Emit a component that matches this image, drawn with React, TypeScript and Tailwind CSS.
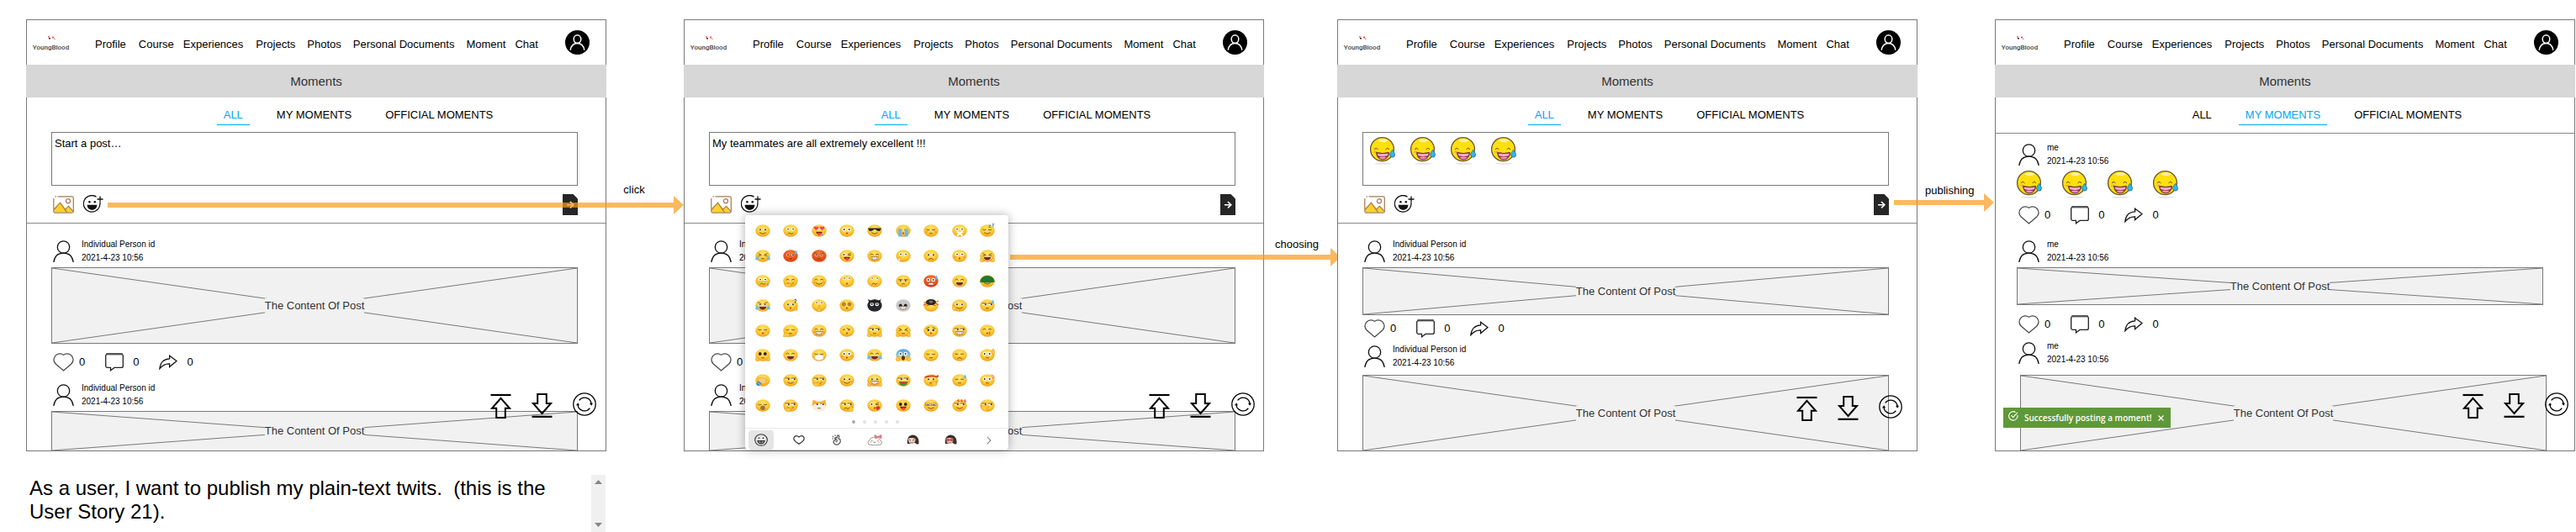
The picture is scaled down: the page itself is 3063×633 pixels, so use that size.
import React from "react";
import type { ReactNode } from "react";

const NAV: { label: string; gap: string }[] = [
  { label: "Profile", gap: "" },
  { label: "Course", gap: "ml-[15px]" },
  { label: "Experiences", gap: "ml-[11px]" },
  { label: "Projects", gap: "ml-[15px]" },
  { label: "Photos", gap: "ml-[14px]" },
  { label: "Personal Documents", gap: "ml-[14px]" },
  { label: "Moment", gap: "ml-[14px]" },
  { label: "Chat", gap: "ml-[11px]" },
];

const TABS = ["ALL", "MY MOMENTS", "OFFICIAL MOMENTS"];

function Logo() {
  return (
    <a href="#home" className="mt-1 flex w-[43px] flex-col items-center">
      <svg width="10" height="5" viewBox="0 0 10 5" className="block" aria-hidden="true">
        <rect x="1" y="0" width="2" height="2" fill="#f08a80" />
        <rect x="2" y="2" width="2" height="1.5" fill="#333" />
        <rect x="6" y="0.5" width="2" height="2" fill="#f05a50" />
        <rect x="8" y="2.5" width="1.5" height="1.5" fill="#f08a80" />
      </svg>
      <span className="mt-1 font-[Roboto,sans-serif] text-[8px] leading-[10px] font-medium text-[#444]">YoungBlood</span>
    </a>
  );
}

function Avatar() {
  return (
    <svg width="29" height="29" viewBox="0 0 29 29" className="block">
      <circle cx="14.5" cy="14.5" r="14.5" fill="#000" />
      <g fill="none" stroke="#fff" strokeWidth="1.5">
        <ellipse cx="14.5" cy="10.6" rx="4.3" ry="4.8" />
        <path d="M6.2 23.6C7 18.5 10 15.4 14.5 15.4S22 18.5 22.8 23.6" />
      </g>
    </svg>
  );
}

function UserIcon() {
  return (
    <svg width="25" height="26" viewBox="0 0 25 26" className="block shrink-0" aria-hidden="true" fill="none" stroke="#111" strokeWidth="1.3">
      <circle cx="12.5" cy="8" r="7.2" />
      <path d="M0.8 26C1.8 19 6.2 15.2 12.5 15.2S23.2 19 24.2 26" />
    </svg>
  );
}

function PictureIcon() {
  return (
    <svg width="25" height="21" viewBox="0 0 25 21" className="block">
      <path d="M1.5 19V14.5L8.5 8l7.2 7.8 3-2.8 5 5.5V19.5H2z" fill="#fcd12a" />
      <g fill="none" stroke="#a5794e" strokeWidth="1.2">
        <path d="M5.5 0.8H22.5a1.8 1.8 0 0 1 1.8 1.8V18.4a1.8 1.8 0 0 1-1.8 1.8H2.6A1.8 1.8 0 0 1 .8 18.4V3M2.5.8H4" />
        <path d="M1 16.6L8.5 8.2l8 11.4M14.5 16.4l4-4 5.6 6" />
        <circle cx="18" cy="6.2" r="2.5" />
      </g>
    </svg>
  );
}

function AddEmojiIcon() {
  return (
    <svg width="24" height="22" viewBox="0 0 24 22" className="block" fill="none" stroke="#111" strokeWidth="1.3">
      <path d="M15.6 2.2A9.8 9.8 0 1 0 19.8 8.6" />
      <path d="M20 1.5v7M16.5 5h7" />
      <circle cx="7.4" cy="8.2" r="1.3" fill="#111" stroke="none" />
      <circle cx="13.8" cy="8.2" r="1.3" fill="#111" stroke="none" />
      <path d="M4.6 11.8H16.4C16.4 15.6 13.8 17.8 10.5 17.8S4.6 15.6 4.6 11.8z" fill="#111" stroke="none" />
    </svg>
  );
}

function SendIcon() {
  return (
    <svg width="18" height="25" viewBox="0 0 18 25" className="block">
      <path d="M0 0H12.5L18 5.5V25H0z" fill="#262626" />
      <path d="M5 12.7h7.5M9 9l3.8 3.7L9 16.4" fill="none" stroke="#fff" strokeWidth="1.6" />
    </svg>
  );
}

function HeartIcon() {
  return (
    <svg width="25" height="22" viewBox="0 0 25 22" className="block" fill="none" stroke="#444" strokeWidth="1.2">
      <path d="M12.5 2.4C15 .4 19.4.3 22 3.2 24.6 6.3 24.4 10.2 21.8 13L12.5 21 3.2 13C.6 10.2.4 6.3 3 3.2 5.6.3 10 .4 12.5 2.4z" />
    </svg>
  );
}

function CommentIcon() {
  return (
    <svg width="22" height="22" viewBox="0 0 22 22" className="block" fill="none" stroke="#222" strokeWidth="1.3">
      <path d="M1.8 1.4H20.2L21.3 3V15.4a2 2 0 0 1-2 2H11L6.5 20.8V17.4H2.7a2 2 0 0 1-2-2V3z" />
      <path d="M1.5 1.2H20.5" stroke="#555" strokeWidth="2.4" />
    </svg>
  );
}

function ShareIcon() {
  return (
    <svg width="22" height="18" viewBox="0 0 22 18" className="block" fill="none" stroke="#111" strokeWidth="1.3">
      <path d="M12.6 1.2L21 7.6 12.6 14.6V10.8C7.5 10.6 4 12.6.9 16.6 1.6 9.6 5.4 5.2 12.6 4.8z" />
    </svg>
  );
}

function ToTopIcon() {
  return (
    <svg width="25" height="31" viewBox="0 0 25 31" className="block" fill="none" stroke="#000" strokeWidth="2">
      <path d="M0.5 3H24.5" strokeWidth="2.2" />
      <path d="M12.5 6.8L23 18.8H17.8V30H7.2V18.8H2z" />
    </svg>
  );
}

function ToBottomIcon() {
  return (
    <svg width="25" height="31" viewBox="0 0 25 31" className="block" fill="none" stroke="#000" strokeWidth="2">
      <path d="M12.5 25L23 13H17.8V2H7.2V13H2z" />
      <path d="M0.5 28.8H24.5" strokeWidth="2.2" />
    </svg>
  );
}

function RefreshIcon() {
  return (
    <svg width="28" height="28" viewBox="0 0 28 28" className="block" fill="none" stroke="#000" strokeWidth="1.3">
      <circle cx="14" cy="14" r="13.2" />
      <path d="M7.6 9.4A8 8 0 0 1 22 13.4M20.4 18.6A8 8 0 0 1 6 14.4" />
      <path d="M20 12.8h4l-1.8 3zM4 15.2h4L6.2 12.2z" fill="#000" stroke="none" />
    </svg>
  );
}

function LaughTear() {
  return (
    <svg width="30" height="33" viewBox="0 0 30 33" className="block" role="img" aria-label="laughing with a tear">
      <ellipse cx="15.5" cy="31.6" rx="10.5" ry="1.2" fill="#e6e6e6" />
      <circle cx="14.5" cy="14.6" r="13.9" fill="#ffe00e" stroke="#6a5630" strokeWidth="1.3" />
      <ellipse cx="15.5" cy="4.2" rx="5.5" ry="2" fill="#fff2a0" />
      <path d="M5 14.8l2.2-1.6 2.2 1.6M18.6 14.8l2.2-1.6 2.2 1.6" fill="none" stroke="#6a4a1c" strokeWidth="1" />
      <ellipse cx="6.2" cy="18" rx="2.2" ry="1.4" fill="#fdab4c" />
      <path d="M7.6 18.4Q15 20.6 22.6 18.4C22.2 24 19 26.8 15 26.8S8 24 7.6 18.4z" fill="#8c3048" stroke="#6a3a38" strokeWidth="1" />
      <path d="M8.6 19.4Q15 21.2 21.6 19.4L20.8 22.2Q15 23.8 9.4 22.2z" fill="#ffb3da" />
      <path d="M10.4 24.2Q15 22.6 19.8 24.2 18 26.2 15 26.2T10.4 24.2z" fill="#ff8fc4" />
      <path d="M26.6 15.4C28.6 18.2 29.5 19.8 29.5 21.2A2.9 2.9 0 0 1 23.7 21.2C23.7 19.8 24.6 18.2 26.6 15.4z" fill="#2cb9ee" stroke="#2b6f94" strokeWidth="0.9" />
    </svg>
  );
}

/* Each face: tone, eyes, mouth, extra */
type Face = [string, string, string, string?];

const FACES: Face[] = [
  ["y", "dot", "smile"], ["y", "white", "wave"], ["y", "heart", "tongue", "drip"], ["y", "wide", "dot"], ["y", "shades", "smile"], ["y", "flat", "dot", "streams"], ["y", "down", "dash", "blush"], ["y", "white", "none", "cross"], ["y", "down", "smile", "zzz"],
  ["y", "squint", "dash", "tears"], ["r", "dot", "dash", "sweat"], ["r", "angry", "frown"], ["y", "wink", "tongue"], ["y", "up", "teeth"], ["y", "white", "none", "pick"], ["y", "dot", "frown"], ["y", "white", "dot", "blush"], ["y", "squint", "laugh", "hands"],
  ["y", "white", "wave", "snot"], ["y", "up", "smile", "hand"], ["y", "up", "smile", "blush"], ["y", "high", "dot"], ["y", "high", "wave"], ["y", "half", "dash"], ["r", "wide", "grit", "sweat"], ["y", "up", "laugh"], ["y", "none", "smile", "helmet"],
  ["y", "angry", "laugh", "tears"], ["y", "dot", "dot", "question"], ["y", "high", "none", "finger"], ["y", "swirl", "dot"], ["k", "wide", "none", "horns"], ["e", "skull", "teeth"], ["y", "squint", "none", "pan"], ["y", "dot", "smile", "wave"], ["y", "side", "dash", "sweat"],
  ["y", "down", "dot", "blow"], ["y", "down", "dash", "clap"], ["y", "up", "teeth", "blush"], ["y", "tilt", "dot"], ["y", "side", "dash", "hands"], ["y", "squint", "dash", "hands"], ["y", "sad", "dot"], ["y", "side", "teeth"], ["y", "up", "dot", "kiss"],
  ["y", "round", "dash", "hands"], ["y", "up", "laugh"], ["y", "down", "none", "mask"], ["y", "wide", "dot", "blush"], ["y", "up", "laugh", "tears"], ["b", "wide", "open", "hands"], ["y", "down", "dash"], ["y", "flat", "frown"], ["y", "wide", "dash", "salute"],
  ["y", "none", "none", "facepalm"], ["y", "side", "smile"], ["y", "side", "wave", "hand"], ["y", "dot", "smile", "blush"], ["y", "dot", "teeth", "hands"], ["y", "side", "none", "melon"], ["y", "dot", "dash", "band"], ["y", "flat", "dash", "sweat"], ["y", "wide", "dash", "shock"],
  ["y", "down", "yawn"], ["y", "side", "smile", "hand"], ["d", "side", "dash", "ears"], ["y", "side", "wave", "finger2"], ["y", "wink", "dot", "kissmark"], ["y", "round", "tongue"], ["y", "glasses", "smile"], ["y", "side", "smile", "six"], ["y", "side", "none", "cover"],
];

const STROKE = "#6b3410";

function eyes(kind: string): ReactNode {
  const line = (d: string) => <path d={d} fill="none" stroke={STROKE} strokeWidth="1.6" strokeLinecap="round" />;
  const pair = (r: number, p: number, y: number, dx: number, fill = "#fff") => (
    <>
      <circle cx="11.5" cy={y} r={r} fill={fill} />
      <circle cx="23.5" cy={y} r={r} fill={fill} />
      <circle cx={11.5 + dx} cy={y} r={p} fill="#222" />
      <circle cx={23.5 + dx} cy={y} r={p} fill="#222" />
    </>
  );
  switch (kind) {
    case "dot": return pair(2.8, 1.9, 12.5, 0.4);
    case "white": return pair(3.8, 1.7, 11, 0.6);
    case "wide": return pair(4.4, 1.8, 12, 0);
    case "high": return pair(3.4, 1.5, 8, 0.5);
    case "round": return pair(4, 3, 12, 0, "#7a4212");
    case "skull": return pair(4, 3.4, 15, 0, "#555");
    case "heart": return <path d="M11 14L5.5 8.6C4 5 9 3.4 11 6.8 13 3.4 18 5 16.5 8.6zM25 14L19.5 8.6C18 5 23 3.4 25 6.8 27 3.4 32 5 30.5 8.6z" fill="#ee3a68" />;
    case "shades": return <path d="M2 9H34L31 15Q25 18 20 12H16Q11 18 5 15z" fill="#26262a" />;
    case "flat": return line("M8 12.5H14M21 12.5H27");
    case "down": return line("M7.5 12.5Q11 15.5 14.5 12.5M20.5 12.5Q24 15.5 27.5 12.5");
    case "up": return line("M7.5 12Q11 8 14.5 12M20.5 12Q24 8 27.5 12");
    case "squint": return line("M8 9.5L14.5 13 8 15M28 9.5L21.5 13 28 15");
    case "angry": return <>{pair(2.8, 1.7, 13, 0)}{line("M7 8L14 11M28 8L21 11")}</>;
    case "wink": return <><circle cx="11" cy="12" r="3.8" fill="#fff" /><circle cx="11" cy="12" r="1.8" fill="#222" />{line("M21 10.5L27 9M21 13L27 13")}</>;
    case "half": return <>{pair(3.2, 1.7, 14, 0, "#e9d9a0")}{line("M7 11.5H15M20 11.5H28")}</>;
    case "swirl": return <g fill="none" stroke={STROKE} strokeWidth="1.3"><circle cx="11" cy="12" r="4" /><circle cx="11" cy="12" r="1.6" /><circle cx="24" cy="12" r="4" /><circle cx="24" cy="12" r="1.6" /></g>;
    case "side": return <><path d="M6 10.5H15.5V13Q11 16 6 13zM20 10.5H29.5V13Q25 16 20 13z" fill="#fff" /><circle cx="13.5" cy="12.4" r="1.7" fill="#222" /><circle cx="27.5" cy="12.4" r="1.7" fill="#222" />{line("M6 10H15.5M20 10H29.5")}</>;
    case "tilt": return line("M18 9L25 12L21 14M9 13L13 12");
    case "sad": return <>{pair(3.4, 2.4, 13.5, 0)}{line("M7 10L13 7M28 10L22 7")}</>;
    case "glasses": return <><path d="M5 10H16V15H5zM19 10H30V15H19z" fill="#fff" stroke={STROKE} strokeWidth="1" />{line("M8 13H13M22 13H27")}</>;
    default: return null;
  }
}

function mouth(kind: string): ReactNode {
  const line = (d: string) => <path d={d} fill="none" stroke={STROKE} strokeWidth="1.6" strokeLinecap="round" />;
  switch (kind) {
    case "smile": return line("M11 20Q18 25.5 25 20");
    case "frown": return line("M13 23Q18 18 23 23");
    case "wave": return line("M12 22Q15 18.5 18 21.5T24 20.5");
    case "dash": return line("M15 21.5H21");
    case "dot": return <ellipse cx="18" cy="21" rx="2.4" ry="1.8" fill="#b3480c" />;
    case "open": return <ellipse cx="18" cy="22" rx="4" ry="5.4" fill="#6b2410" />;
    case "yawn": return <ellipse cx="18" cy="20.5" rx="5.6" ry="5.4" fill="#9a7048" />;
    case "laugh": return <path d="M8.5 17H27.5Q26 26 18 26T8.5 17z" fill="#7a2c10" stroke="#fff" strokeWidth="1.2" />;
    case "teeth": return <><path d="M9 17H27Q26.5 25 18 25T9 17z" fill="#fff" stroke={STROKE} strokeWidth="1" /><path d="M13.5 17V24M18 17V25M22.5 17V24" stroke={STROKE} strokeWidth="0.8" /></>;
    case "tongue": return <><path d="M10.5 17.5H25.5Q24 24 18 24T10.5 17.5z" fill="#7a2410" /><path d="M15 20H22V25Q18.5 28 15 25z" fill="#ee4650" /></>;
    case "grit": return <path d="M11 21Q18 16 25 21V24H11z" fill="#fff" stroke="#6b1c10" strokeWidth="1" />;
    default: return null;
  }
}

function extra(kind: string | undefined): ReactNode {
  const palm = { fill: "#ffca3a", stroke: "#d98612", strokeWidth: 0.9 };
  switch (kind) {
    case "drip": return <path d="M24 20Q28 26 25.5 28.5 22 28 24 20z" fill="#58b7ee" />;
    case "streams": return <path d="M6.5 11H14.5V29H6.5zM21.5 11H29.5V29H21.5z" fill="#6fb6ea" />;
    case "blush": return <><ellipse cx="7" cy="18" rx="3.4" ry="2" fill="#fb8a3c" opacity="0.75" /><ellipse cx="29" cy="18" rx="3.4" ry="2" fill="#fb8a3c" opacity="0.75" /></>;
    case "cross": return <path d="M12 17L25 27M25 17L12 27" stroke="#fff" strokeWidth="4.2" />;
    case "zzz": return <path d="M21 2H26L21.5 7H26M29 -1H34L29.5 4H34" fill="none" stroke="#5686b8" strokeWidth="1.8" />;
    case "tears": return <><path d="M2 17Q10 15 9 20 7 27 0 24z" fill="#67bdf0" /><path d="M34 17Q26 15 27 20 29 27 36 24z" fill="#67bdf0" /></>;
    case "sweat": return <path d="M31 1Q35.5 7 33 10.5 28.5 12 27.5 7.5z" fill="#63bbef" />;
    case "snot": return <><path d="M8 15H27V18H8z" fill="#9fcf5a" opacity="0.8" /><path d="M29 18Q34 24 30.5 27 26 25 29 18z" fill="#58b7ee" /></>;
    case "pick": return <path d="M9 17L12 29L5 25z" {...palm} fill="#fff" />;
    case "hands": return <><path d="M3 19Q9 20 9 29H2Q-1 23 3 19z" {...palm} /><path d="M33 19Q27 20 27 29H34Q37 23 33 19z" {...palm} /></>;
    case "hand": return <path d="M3 22Q14 22 24 17 24 22 18 23 21 29 10 29 4 28 3 22z" {...palm} />;
    case "salute": return <path d="M29 9Q28 2 32 0 36 3 35 9 35 15 31 16z" {...palm} />;
    case "wave": return <path d="M2 13Q7 14 8 20 11 24 7 28 1 27 1 20z" {...palm} />;
    case "clap": return <path d="M1 29Q2 19 8 18 9 24 12 19 17 23 15 29z" {...palm} />;
    case "finger": return <path d="M16.5 15H20V23Q24 23 23 29H13Q12 24 16.5 23z" {...palm} />;
    case "finger2": return <path d="M22 29Q20 21 25 21L30 14 31 21Q35 25 31 29z" {...palm} />;
    case "blow": return <path d="M21 20Q29 15 32 20 30 27 24 25z" {...palm} />;
    case "helmet": return <path d="M0 17Q3 2 18 2T36 17Q18 21 0 17z" fill="#24772c" />;
    case "question": return <><path d="M26 3Q28 -1 31 1 33 4 29 6V9" fill="none" stroke="#333" strokeWidth="1.8" /><path d="M30 17Q37 20 33 27L28 26z" {...palm} /></>;
    case "horns": return <path d="M5 9L2 0L13 5L18 0L24 5L33 0L31 9z" fill="#222" />;
    case "pan": return <><ellipse cx="18" cy="7" rx="12" ry="7" fill="#2b2424" /><ellipse cx="18" cy="6" rx="5" ry="3" fill="#77756c" /><path d="M0 14L8 11M36 14L29 10M1 8H5M31 6L36 4" stroke="#d93c3c" strokeWidth="2" /></>;
    case "mask": return <path d="M8 16Q18 13 28 16V24Q18 31 8 24z" fill="#f7f9fa" stroke="#b8c5cc" strokeWidth="0.8" />;
    case "kiss": return <path d="M22 17Q26 18 23 20.5 26 22 22 24" fill="none" stroke={STROKE} strokeWidth="1.3" />;
    case "kissmark": return <path d="M23 17Q30 15 31 20 28 27 23 25 19 20 23 17z" fill="#d92a3a" />;
    case "facepalm": return <><path d="M1 22Q8 20 11 28H5z" fill="#2e90dc" /><path d="M6 10Q16 6 28 12 31 15 24 17L27 22Q20 26 12 22 6 17 6 10z" {...palm} fill="#f8cb76" /><path d="M4 19Q12 18 14 25" stroke="#2e90dc" strokeWidth="3" fill="none" /></>;
    case "melon": return <><path d="M8 18H29Q28 28 18 28T8 18z" fill="#38953d" /><path d="M11 18H26Q25 24 18 24T11 18z" fill="#e83232" /></>;
    case "band": return <><path d="M3 8Q18 2 33 7L35 3" fill="none" stroke="#d43b22" strokeWidth="3.5" /><path d="M20 29V17Q24 13 26 18H31V27z" {...palm} /></>;
    case "shock": return <path d="M27 2Q35 2 34 11M29 5Q32 6 31 10" fill="none" stroke="#ee7777" strokeWidth="2" />;
    case "ears": return <path d="M1 17L3 1L13 6H23L33 1L35 17Q29 8 18 9T1 17z" fill="#f8b133" />;
    case "six": return <path d="M16 0Q12 3 14 6 17 7 17 4 15 2 13.5 5M24 0Q20 3 22 6 25 7 25 4 23 2 21.5 5M32 0Q28 3 30 6 33 7 33 4 31 2 29.5 5" fill="none" stroke="#e33b30" strokeWidth="1.7" />;
    case "cover": return <path d="M4 14Q13 14 22 17 23 21 16 21L20 25Q14 30 8 27 3 22 4 14z" {...palm} />;
    default: return null;
  }
}

function FaceIcon({ face }: { face: Face }) {
  const tones: Record<string, string> = { y: "url(#tone-y)", r: "url(#tone-r)", b: "url(#tone-b)", k: "#26272b", e: "#c9c9cc", d: "#f7efdc" };
  return (
    <svg width="18" height="15" viewBox="0 0 36 30" className="block overflow-visible" aria-hidden="true">
      <ellipse cx="18" cy="15" rx="17.3" ry="14.6" fill={tones[face[0]]} />
      {eyes(face[1])}
      {mouth(face[2])}
      {extra(face[3])}
    </svg>
  );
}

function Tones() {
  return (
    <svg width="0" height="0" className="absolute" aria-hidden="true">
      <defs>
        <radialGradient id="tone-y" cx="0.5" cy="0.35" r="0.68">
          <stop offset="0" stopColor="#ffe774" />
          <stop offset="0.6" stopColor="#fdc932" />
          <stop offset="1" stopColor="#ee940e" />
        </radialGradient>
        <radialGradient id="tone-r" cx="0.5" cy="0.3" r="0.7">
          <stop offset="0" stopColor="#fb7a30" />
          <stop offset="1" stopColor="#dd3d12" />
        </radialGradient>
        <linearGradient id="tone-b" x1="0" y1="0" x2="0" y2="1">
          <stop offset="0" stopColor="#4aa2ea" />
          <stop offset="0.5" stopColor="#8cc3dd" />
          <stop offset="0.75" stopColor="#fbc832" />
        </linearGradient>
      </defs>
    </svg>
  );
}

function Girl({ glasses }: { glasses?: boolean }) {
  return (
    <svg width="15" height="13" viewBox="0 0 30 26" className="block" aria-hidden="true">
      <path d="M2 22Q-1 4 13 1 27 0 29 16L29 22Q25 25 20 20L6 22z" fill="#3a302e" />
      <path d="M3 10Q12 6 21 10 22 20 13 22 4 21 3 10z" fill="#f3d3c4" />
      {glasses ? (
        <path d="M4 11H11V15H4zM14 11H21V15H14zM11 13H14" fill="#b87a7a" stroke="#b02a36" strokeWidth="1.5" />
      ) : (
        <path d="M5 12L10 14M19 12L14 14" stroke="#4a2a22" strokeWidth="1.5" />
      )}
      <path d="M9 18Q13 21 17 18" fill="none" stroke="#b04848" strokeWidth="1.5" />
    </svg>
  );
}

function EmojiPicker() {
  const cell = "flex h-[23px] w-[30px] items-center justify-center rounded-sm";
  return (
    <div role="dialog" aria-label="Emoji picker" className="absolute top-[232px] left-[72px] z-20 flex w-[313px] flex-col rounded bg-white shadow-[0_0_12px_rgba(0,0,0,0.32)]">
      <Tones />
      <div className="grid h-[241px] grid-cols-9 grid-rows-8 pt-1 pr-2 pl-1">
        {FACES.map((face, i) => (
          <button key={i} type="button" aria-label={`Emoji ${i + 1}`} className="flex min-h-0 items-center justify-center">
            <FaceIcon face={face} />
          </button>
        ))}
      </div>
      <div className="flex h-[7px] items-end justify-center gap-[9px] pr-1">
        <span className="size-1 rounded-full bg-[#aaa]" />
        <span className="size-1 rounded-full bg-[#e0e0e0]" />
        <span className="size-1 rounded-full bg-[#e0e0e0]" />
        <span className="size-1 rounded-full bg-[#e0e0e0]" />
        <span className="size-1 rounded-full bg-[#e0e0e0]" />
      </div>
      <div className="mt-[5px] flex items-center justify-between border-t border-[#e8e8e8] pt-[2px] pr-2 pl-1">
        <button type="button" aria-label="Smileys" className={cell + " bg-[#e5e5e5]"}>
          <svg width="16" height="15" viewBox="0 0 16 15" fill="none" stroke="#333" strokeWidth="1.1">
            <ellipse cx="8" cy="7.5" rx="7.3" ry="6.8" />
            <path d="M3.8 8.5H12.2Q11.5 12 8 12T3.8 8.5zM8 8.5V12M4.5 10H11.5" />
            <path d="M5.5 4.5V6M10.5 4.5V6" strokeWidth="1.5" />
          </svg>
        </button>
        <button type="button" aria-label="Favorites" className={cell}>
          <svg width="14" height="11" viewBox="0 0 14 11" fill="none" stroke="#333" strokeWidth="1.2">
            <path d="M7 2Q10-.6 12.5 1.8 14.5 4.6 11 7.4L7 10.3 3 7.4Q-.5 4.6 1.5 1.8 4-.6 7 2z" />
          </svg>
        </button>
        <button type="button" aria-label="Gestures" className={cell}>
          <svg width="12" height="13" viewBox="0 0 12 13" fill="none" stroke="#444" strokeWidth="1.1">
            <path d="M5 6L3.5 4.5Q5 3 6 4L7 1Q9 .5 8.8 2.500L8 5Q10.5 5 10 7 11 9 9 10.500 8 12.500 5 12 2 11.500 2 8L5 6L7 7.500M1 2L2.200 3.200M4 .5L4.200 2M.5 5H2M4.500 8.500L6.500 9" />
          </svg>
        </button>
        <button type="button" aria-label="Sticker set one" className={cell}>
          <svg width="19" height="13" viewBox="0 0 38 26">
            <path d="M4 24Q-1 19 5 14 8 6 18 6T32 14Q38 18 33 24 18 27 4 24z" fill="#fff" stroke="#777" strokeWidth="1.5" />
            <path d="M18 1L25 5L34 1V9L26 6L20 10z" fill="#ef858a" stroke="#a9474e" strokeWidth="1" />
            <path d="M10 14L13 15M24 15L27 14M15 18Q18 20 21 18" fill="none" stroke="#555" strokeWidth="1.4" />
            <circle cx="9" cy="18" r="2" fill="#f8b4b4" /><circle cx="28" cy="18" r="2" fill="#f8b4b4" />
          </svg>
        </button>
        <button type="button" aria-label="Sticker set two" className={cell}><Girl /></button>
        <button type="button" aria-label="Sticker set three" className={cell}><Girl glasses /></button>
        <button type="button" aria-label="More sticker sets" className={cell}>
          <svg width="6" height="10" viewBox="0 0 6 10" fill="none" stroke="#888" strokeWidth="1.1"><path d="M.8.8L5 5 .8 9.2" /></svg>
        </button>
      </div>
    </div>
  );
}

function Author({ name, className }: { name: string; className: string }) {
  return (
    <div className={"flex h-[26px] items-center gap-[9px] " + className}>
      <UserIcon />
      <div className="text-[10px] leading-4">
        <p>{name}</p>
        <p>2021-4-23 10:56</p>
      </div>
    </div>
  );
}

function Actions({ className }: { className: string }) {
  return (
    <div className={"flex h-[22px] items-center " + className}>
      <button type="button" aria-label="Like" className="flex items-center gap-[6px]"><HeartIcon /><span>0</span></button>
      <button type="button" aria-label="Comment" className="ml-6 flex items-center gap-[11px]"><CommentIcon /><span>0</span></button>
      <button type="button" aria-label="Share" className="ml-6 flex items-center gap-[11px]"><ShareIcon /><span>0</span></button>
    </div>
  );
}

function Placeholder({ className }: { className: string }) {
  return (
    <div className={"relative flex items-center justify-center border border-[#797979] bg-[#f1f1f1] " + className}>
      <svg className="absolute inset-0 size-full" viewBox="0 0 100 100" preserveAspectRatio="none" aria-hidden="true">
        <path d="M0 0L100 100M0 100L100 0" stroke="#797979" strokeWidth="1" vectorEffect="non-scaling-stroke" />
      </svg>
      <span className="relative bg-[#f1f1f1] leading-[18px] text-[#333]">The Content Of Post</span>
    </div>
  );
}

function Composer({ text, children }: { text?: string; children?: ReactNode }) {
  return (
    <form onSubmit={(e) => e.preventDefault()}>
      {children ? (
        <div role="textbox" aria-label="Post" className="mt-2 mr-[33px] ml-[29px] flex h-16 items-start border border-[#797979] pt-[5px] pl-2">
          {children}
        </div>
      ) : (
        <div className="mt-2 mr-[33px] ml-[29px] flex">
          <textarea aria-label="Post" defaultValue={text} className="h-16 w-full resize-none border border-[#797979] bg-white px-[3px] py-[5px] leading-4 outline-none" />
        </div>
      )}
      <div className="flex h-[45px] items-center border-b border-[#888] pr-[33px] pl-[31px]">
        <button type="button" aria-label="Add picture"><PictureIcon /></button>
        <button type="button" aria-label="Add emoji" className="ml-[11px]"><AddEmojiIcon /></button>
        <button type="submit" aria-label="Publish" className="ml-auto"><SendIcon /></button>
      </div>
    </form>
  );
}

function Arrow({ className }: { className: string }) {
  return (
    <div className={"pointer-events-none absolute flex items-center opacity-70 " + className} aria-hidden="true">
      <span className="h-[6px] flex-1 bg-[#f99b1c]" />
      <svg width="12" height="22" viewBox="0 0 12 22" className="block"><path d="M0 0L12 11 0 22z" fill="#f99b1c" /></svg>
    </div>
  );
}

function Screen({ active, tools, children, overlay }: { active: string; tools: string; children: ReactNode; overlay?: ReactNode }) {
  return (
    <main className="relative flex flex-col border border-[#797979] bg-white">
      <header className="flex h-[53px] items-center pr-[19px] pl-[7px]">
        <Logo />
        <nav className="mt-1 ml-[31px] flex items-center whitespace-nowrap">
          {NAV.map((item) => (
            <a key={item.label} href={"#" + item.label.toLowerCase().replace(" ", "-")} className={item.gap}>{item.label}</a>
          ))}
        </nav>
        <button type="button" aria-label="Account" className="ml-auto"><Avatar /></button>
      </header>
      <h1 className="-mx-px flex h-[39px] items-center justify-center bg-[#d7d7d7] text-[15px] text-[#333]">Moments</h1>
      <div role="tablist" className="flex justify-center gap-6 pl-[100px] whitespace-nowrap">
        {TABS.map((tab) => (
          <button
            key={tab}
            type="button"
            role="tab"
            aria-selected={tab === active}
            className={"border-b px-2 pt-3 pb-[2px] leading-[18px] " + (tab === active ? "border-[#02a7f0] text-[#02a7f0]" : "border-transparent")}
          >
            {tab}
          </button>
        ))}
      </div>
      {children}
      <div className={"absolute flex items-start gap-6 " + tools}>
        <button type="button" aria-label="Back to top"><ToTopIcon /></button>
        <button type="button" aria-label="Go to bottom"><ToBottomIcon /></button>
        <button type="button" aria-label="Refresh"><RefreshIcon /></button>
      </div>
      {overlay}
    </main>
  );
}

function Toast() {
  return (
    <div role="status" className="absolute bottom-[27px] left-[9px] flex h-6 w-[199px] items-center bg-[#5f9838] pl-[6px] text-white">
      <svg width="12" height="12" viewBox="0 0 12 12" fill="none" stroke="#fff" strokeWidth="1.1" className="-mt-1 block shrink-0" aria-hidden="true">
        <path d="M10.9 4.8A5.2 5.2 0 1 1 8.6 1.5M3.5 5.2L5.6 7.6 11 1.8" />
      </svg>
      <span className="ml-[7px] font-['Open_Sans',sans-serif] text-[10px] leading-4 font-semibold whitespace-nowrap">Successfully posting a moment!</span>
      <button type="button" aria-label="Dismiss" className="mr-2 ml-auto shrink-0">
        <svg width="7" height="7" viewBox="0 0 7 7" stroke="#fff" strokeWidth="1.1" className="block"><path d="M.5.5L6.5 6.5M6.5.5L.5 6.5" /></svg>
      </button>
    </div>
  );
}

function FeedPosts() {
  return (
    <>
      <Author name="Individual Person id" className="mt-5 ml-[31px]" />
      <Placeholder className="mt-[6px] mr-[33px] ml-[29px] h-[91px]" />
      <Actions className="mt-[11px] ml-[31px]" />
      <Author name="Individual Person id" className="mt-[15px] ml-[31px]" />
      <Placeholder className="mt-[6px] mr-[33px] -mb-px ml-[29px] h-12" />
    </>
  );
}

export default function App() {
  return (
    <div className="grid grid-cols-[minmax(0,1fr)_92px_minmax(0,1fr)_87px_minmax(0,1fr)_92px_minmax(0,1fr)] items-start bg-white pt-[23px] pr-px pl-[31px] font-['Liberation_Sans',Arial,sans-serif] text-[13px] leading-4 text-black">
      <Screen active="ALL" tools="right-[11px] bottom-[38px]" overlay={<Arrow className="top-[209px] -right-[93px] left-[96px]" />}>
        <Composer text="Start a post…" />
        <FeedPosts />
      </Screen>

      <p className="relative mt-[195px] pr-[26px] text-center">click</p>

      <Screen
        active="ALL"
        tools="right-[10px] bottom-[38px]"
        overlay={<><Arrow className="top-[271px] -right-[92px] left-[387px]" /><EmojiPicker /></>}
      >
        <Composer text="My teammates are all extremely excellent !!!" />
        <FeedPosts />
      </Screen>

      <p className="relative mt-[260px] pr-[22px] text-right">choosing</p>

      <Screen active="ALL" tools="right-[17px] bottom-[35px]" overlay={<Arrow className="top-[206px] -right-[92px] left-[661px]" />}>
        <Composer>
          <div className="flex gap-x-[18px]">
            <LaughTear /><LaughTear /><LaughTear /><LaughTear />
          </div>
        </Composer>
        <Author name="Individual Person id" className="mt-5 ml-[31px]" />
        <Placeholder className="mt-[6px] mr-[33px] ml-[29px] h-[57px]" />
        <Actions className="mt-[5px] ml-[31px]" />
        <Author name="Individual Person id" className="mt-[9px] ml-[31px]" />
        <Placeholder className="mt-[9px] mr-[33px] -mb-px ml-[29px] h-[91px]" />
      </Screen>

      <p className="relative mt-[196px] pl-[9px]">publishing</p>

      <Screen active="MY MOMENTS" tools="right-[7px] bottom-[38px]" overlay={<Toast />}>
        <div className="h-[10px] border-b border-[#888]" />
        <Author name="me" className="mt-3 ml-[27px]" />
        <div className="mt-[6px] ml-[25px] flex gap-6">
          <LaughTear /><LaughTear /><LaughTear /><LaughTear />
        </div>
        <Actions className="mt-[9px] ml-[27px]" />
        <Author name="me" className="mt-[19px] ml-[27px]" />
        <Placeholder className="mt-[6px] mr-[37px] ml-[25px] h-[45px]" />
        <Actions className="mt-3 ml-[27px]" />
        <Author name="me" className="mt-[10px] ml-[27px]" />
        <Placeholder className="mt-[13px] mr-[33px] -mb-px ml-[29px] h-[91px]" />
      </Screen>

      <section className="col-start-1 mt-7 flex h-[68px] items-stretch justify-between pr-px pl-1">
        <p className="flex-1 pt-[2px] text-[24px] leading-7 whitespace-pre-wrap">As a user, I want to publish my plain-text twits.  (this is the User Story 21).</p>
        <div className="flex w-[17px] flex-col items-center justify-between bg-[#f0f0f0] py-[6px]">
          <button type="button" aria-label="Scroll up">
            <svg width="9" height="5" viewBox="0 0 9 5" className="block"><path d="M0 5L4.5 0 9 5z" fill="#858585" /></svg>
          </button>
          <button type="button" aria-label="Scroll down">
            <svg width="9" height="5" viewBox="0 0 9 5" className="block"><path d="M0 0L4.5 5 9 0z" fill="#858585" /></svg>
          </button>
        </div>
      </section>
    </div>
  );
}
